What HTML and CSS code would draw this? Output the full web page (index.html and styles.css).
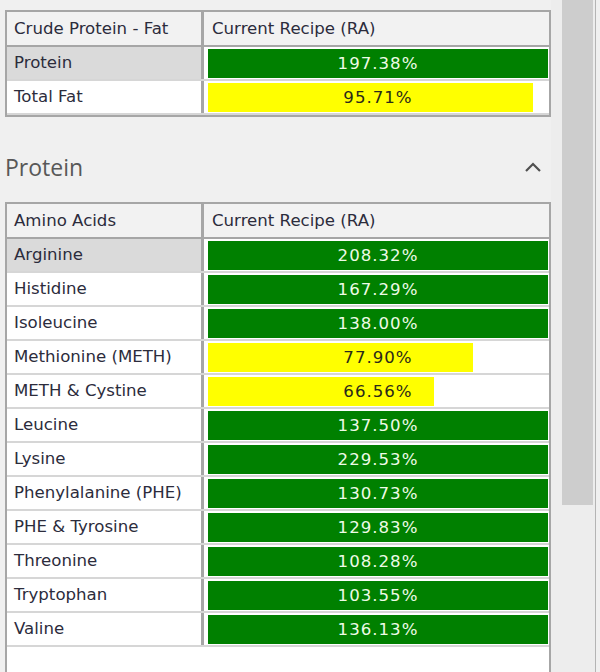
FILE: index.html
```html
<!DOCTYPE html>
<html lang="en">
<head>
  <meta charset="UTF-8">
  <title>Nutrient Analysis</title>
  <link rel="stylesheet" href="styles.css">
</head>
<body>
  <div class="layout">
    <div class="panel">
      <div class="grid">
        <div class="row head">
          <div class="name">Crude Protein - Fat</div>
          <div class="val-head">Current Recipe (RA)</div>
        </div>
        <div class="row">
          <div class="name selected">Protein</div>
          <div class="val"><span class="bar ok" style="width:100%"></span><span class="pct ok">197.38%</span></div>
        </div>
        <div class="row">
          <div class="name">Total Fat</div>
          <div class="val"><span class="bar low" style="width:95.71%"></span><span class="pct low">95.71%</span></div>
        </div>
      </div>

      <div class="section-head">
        <h2>Protein</h2>
        <svg class="chevron" width="18" height="12" viewBox="0 0 18 12">
          <path d="M2 10 L9 3 L16 10" fill="none" stroke="#505050" stroke-width="2.2"/>
        </svg>
      </div>

      <div class="grid tall">
        <div class="row head">
          <div class="name">Amino Acids</div>
          <div class="val-head">Current Recipe (RA)</div>
        </div>
        <div class="row">
          <div class="name selected">Arginine</div>
          <div class="val"><span class="bar ok" style="width:100%"></span><span class="pct ok">208.32%</span></div>
        </div>
        <div class="row">
          <div class="name">Histidine</div>
          <div class="val"><span class="bar ok" style="width:100%"></span><span class="pct ok">167.29%</span></div>
        </div>
        <div class="row">
          <div class="name">Isoleucine</div>
          <div class="val"><span class="bar ok" style="width:100%"></span><span class="pct ok">138.00%</span></div>
        </div>
        <div class="row">
          <div class="name">Methionine (METH)</div>
          <div class="val"><span class="bar low" style="width:77.9%"></span><span class="pct low">77.90%</span></div>
        </div>
        <div class="row">
          <div class="name">METH &amp; Cystine</div>
          <div class="val"><span class="bar low" style="width:66.56%"></span><span class="pct low">66.56%</span></div>
        </div>
        <div class="row">
          <div class="name">Leucine</div>
          <div class="val"><span class="bar ok" style="width:100%"></span><span class="pct ok">137.50%</span></div>
        </div>
        <div class="row">
          <div class="name">Lysine</div>
          <div class="val"><span class="bar ok" style="width:100%"></span><span class="pct ok">229.53%</span></div>
        </div>
        <div class="row">
          <div class="name">Phenylalanine (PHE)</div>
          <div class="val"><span class="bar ok" style="width:100%"></span><span class="pct ok">130.73%</span></div>
        </div>
        <div class="row">
          <div class="name">PHE &amp; Tyrosine</div>
          <div class="val"><span class="bar ok" style="width:100%"></span><span class="pct ok">129.83%</span></div>
        </div>
        <div class="row">
          <div class="name">Threonine</div>
          <div class="val"><span class="bar ok" style="width:100%"></span><span class="pct ok">108.28%</span></div>
        </div>
        <div class="row">
          <div class="name">Tryptophan</div>
          <div class="val"><span class="bar ok" style="width:100%"></span><span class="pct ok">103.55%</span></div>
        </div>
        <div class="row">
          <div class="name">Valine</div>
          <div class="val"><span class="bar ok" style="width:100%"></span><span class="pct ok">136.13%</span></div>
        </div>
      </div>
    </div>

    <div class="scrollbar">
      <div class="thumb"></div>
    </div>
  </div>
</body>
</html>
```

FILE: styles.css
```css
body {
  margin: 0;
  background-color: #f0f0f0;
  font-family: "DejaVu Sans", Verdana, sans-serif;
  font-size: 16.6px;
  color: #2c2c3c;
  height: 672px;
  overflow: hidden;
}
.layout {
  display: flex;
  height: 100%;
}
.panel {
  width: 546px;
  padding: 10px 0 0 5px;
}

/* data grids */
.grid {
  width: 546px;
  box-sizing: border-box;
  border: 2px solid #a6a6a6;
  background: #fff;
}
.grid.tall {
  padding-bottom: 60px;
}
.row {
  display: grid;
  grid-template-columns: 197px 1fr;
  height: 32px;
  border-bottom: 2px solid #d6d6d6;
}
.row.head {
  height: 33px;
  background: #f2f2f2;
  border-bottom: 2px solid #a6a6a6;
}
.name {
  border-right: 3px solid #a6a6a6;
  padding-left: 7px;
  line-height: 32px;
  white-space: nowrap;
}
.head .name,
.val-head {
  line-height: 33px;
}
.val-head {
  padding-left: 8px;
}
.name.selected {
  background: #dadada;
}
.val {
  display: grid;
  padding: 2px 1px 1px 4px;
}
.bar,
.pct {
  grid-area: 1 / 1;
}
.bar {
  justify-self: start;
  height: 29px;
}
.bar.ok {
  background: #008000;
}
.bar.low {
  background: #ffff00;
}
.pct {
  justify-self: center;
  align-self: center;
  letter-spacing: 1px;
}
.pct.ok {
  color: #eefbe6;
}
.pct.low {
  color: #2a2a1a;
}

/* collapsible section title */
.section-head {
  display: flex;
  align-items: center;
  justify-content: space-between;
  height: 71px;
  padding: 14px 9px 0 0;
}
.section-head h2 {
  margin: 0;
  font-family: "Open Sans", sans-serif;
  font-weight: normal;
  font-size: 23px;
  color: #585858;
  margin-left: 0;
}

/* vertical scrollbar */
.scrollbar {
  width: 44px;
  border-right: 1px solid #b4b4b4;
  background: #ededed;
}
.thumb {
  margin-left: 11px;
  width: 31px;
  height: 505px;
  background: #cdcdcd;
}
```
